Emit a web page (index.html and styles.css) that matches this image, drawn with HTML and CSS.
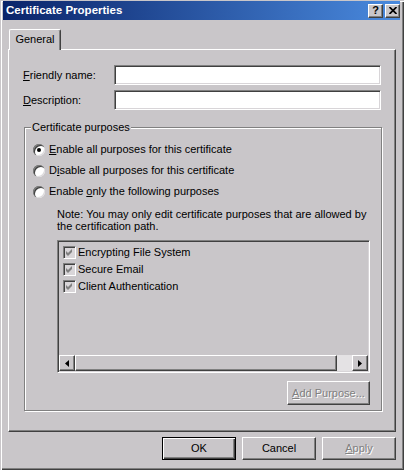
FILE: index.html
```html
<!DOCTYPE html>
<html lang="en">
  <head>
    <meta charset="UTF-8" />
    <title>Certificate Properties</title>
    <link rel="stylesheet" href="styles.css">
  </head>
  <body>
    <div class="window">
      <div class="titlebar">
        <span class="title">Certificate Properties</span>
        <div class="title-buttons">
          <span class="title-btn help">?</span>
          <span class="title-btn">
            <svg width="8" height="7" viewBox="0 0 8 7">
              <path d="M0.5 0 L7.5 7 M7.5 0 L0.5 7" stroke="#000" stroke-width="1.7" />
            </svg>
          </span>
        </div>
      </div>

      <div class="client">
        <div class="tabs">
          <div class="tab">General</div>
        </div>

        <div class="tab-panel">
          <div class="field-row">
            <label class="field-label"><u>F</u>riendly name:</label>
            <input class="field" type="text" />
          </div>
          <div class="field-row">
            <label class="field-label"><u>D</u>escription:</label>
            <input class="field" type="text" />
          </div>

          <fieldset class="group">
            <legend>Certificate purposes</legend>

            <div class="radio-row">
              <span class="radio checked"><span class="radio-dot"></span></span>
              <span><u>E</u>nable all purposes for this certificate</span>
            </div>
            <div class="radio-row">
              <span class="radio"></span>
              <span>D<u>i</u>sable all purposes for this certificate</span>
            </div>
            <div class="radio-row">
              <span class="radio"></span>
              <span>Enable <u>o</u>nly the following purposes</span>
            </div>

            <p class="note">
              Note: You may only edit certificate purposes that are allowed by<br />
              the certification path.
            </p>

            <div class="listbox">
              <div class="list-items">
                <div class="list-item">
                  <span class="check"><svg width="11" height="11" viewBox="0 0 11 11"><polygon points="2,4 4,6 8,2 8,5 4,9 2,7" fill="#808080" /></svg></span>
                  Encrypting File System
                </div>
                <div class="list-item">
                  <span class="check"><svg width="11" height="11" viewBox="0 0 11 11"><polygon points="2,4 4,6 8,2 8,5 4,9 2,7" fill="#808080" /></svg></span>
                  Secure Email
                </div>
                <div class="list-item">
                  <span class="check"><svg width="11" height="11" viewBox="0 0 11 11"><polygon points="2,4 4,6 8,2 8,5 4,9 2,7" fill="#808080" /></svg></span>
                  Client Authentication
                </div>
              </div>
              <div class="hscroll">
                <span class="scroll-btn">
                  <svg width="4" height="7" viewBox="0 0 4 7"><polygon points="4,0 0,3.5 4,7" fill="#000" /></svg>
                </span>
                <span class="scroll-thumb"></span>
                <span class="scroll-track"></span>
                <span class="scroll-btn">
                  <svg width="4" height="7" viewBox="0 0 4 7"><polygon points="0,0 4,3.5 0,7" fill="#000" /></svg>
                </span>
              </div>
            </div>

            <div class="group-actions">
              <button class="btn add-btn" disabled><u>A</u>dd Purpose...</button>
            </div>
          </fieldset>
        </div>

        <div class="dialog-buttons">
          <button class="btn default">OK</button>
          <button class="btn">Cancel</button>
          <button class="btn" disabled><u>A</u>pply</button>
        </div>
      </div>
    </div>
  </body>
</html>
```

FILE: styles.css
```css
:root {
  --face: #c9c6c9;
  --light: #ffffff;
  --shadow: #808080;
  --dark: #404040;
  --track: #e4e2e4;
}

* {
  box-sizing: border-box;
  margin: 0;
  padding: 0;
}

body {
  font-family: "Liberation Sans", Arial, sans-serif;
  font-size: 11px;
  line-height: 13px;
  color: #000;
  background: var(--face);
}

u {
  text-decoration: underline;
  text-underline-offset: 1px;
}

/* window frame */

.window {
  width: 404px;
  height: 470px;
  display: flex;
  flex-direction: column;
  padding: 1px 4px 3px 3px;
  background: var(--face);
  box-shadow: inset 1px 1px var(--face), inset 2px 2px var(--light),
    inset -1px -1px var(--dark), inset -2px -2px var(--shadow);
}

.titlebar {
  height: 19px;
  display: flex;
  align-items: center;
  justify-content: space-between;
  padding: 0 0 0 3px;
  background: linear-gradient(to right, #0a246a, #4a8ade);
}

.title {
  color: #fff;
  font-weight: bold;
  font-size: 11.5px;
}

.title-buttons {
  display: flex;
  gap: 2px;
}

.title-btn {
  width: 15px;
  height: 14px;
  display: flex;
  align-items: center;
  justify-content: center;
  background: var(--face);
  border: 1px solid;
  border-color: var(--light) var(--dark) var(--dark) var(--light);
  box-shadow: inset -1px -1px var(--shadow);
  font-weight: bold;
  font-size: 11px;
  line-height: 11px;
}

.title-btn.help {
  padding-bottom: 1px;
}

/* client area */

.client {
  flex: 1;
  display: flex;
  flex-direction: column;
  padding: 9px 4px 7px 5px;
}

.tabs {
  display: flex;
  align-items: flex-start;
  height: 20px;
}

.tab {
  position: relative;
  height: 21px;
  width: 52px;
  margin-left: 1px;
  margin-bottom: -1px;
  text-align: center;
  line-height: 18px;
  background: var(--face);
  border-top: 1px solid var(--light);
  border-left: 1px solid var(--light);
  border-right: 1px solid var(--dark);
  border-radius: 2px 2px 0 0;
  box-shadow: inset -1px 0 var(--shadow);
}

.tab-panel {
  flex: 1;
  display: flex;
  flex-direction: column;
  padding: 15px 14px 0 14px;
  border: 1px solid;
  border-color: var(--light) var(--dark) var(--dark) var(--light);
  box-shadow: inset -1px -1px var(--shadow);
}

.field-row {
  display: flex;
  align-items: center;
  margin-bottom: 5px;
}

.field-label {
  width: 91px;
}

.field {
  flex: 1;
  height: 20px;
  background: #fff;
  border: 1px solid;
  border-color: var(--shadow) var(--light) var(--light) var(--shadow);
  box-shadow: inset 1px 1px var(--dark), inset -1px -1px #d8d5d8;
  outline: none;
  font: inherit;
}

/* group box */

.group {
  margin: 6px -1px 0 1px;
  padding: 5px 11px 5px 8px;
  border: 1px solid var(--shadow);
  box-shadow: inset 1px 1px var(--light), 1px 1px 0 var(--light);
}

.group legend {
  margin-left: -2px;
  padding: 0 1px;
  background: var(--face);
}

.radio-row {
  display: flex;
  align-items: center;
  height: 21px;
}

.radio {
  width: 12px;
  height: 12px;
  margin-right: 4px;
  display: flex;
  align-items: center;
  justify-content: center;
  border-radius: 50%;
  background: #fff;
  box-shadow: inset 1px 1px 0 var(--shadow), inset 2px 2px 0 var(--dark),
    inset -1px -1px 0 #dcdadc;
}

.radio-dot {
  width: 4px;
  height: 4px;
  border-radius: 50%;
  background: #000;
}

.note {
  margin: 6px 0 0 24px;
  line-height: 12px;
  white-space: nowrap;
}

/* list of purposes */

.listbox {
  height: 133px;
  margin: 8px 0 0 24px;
  padding: 1px;
  display: flex;
  flex-direction: column;
  border: 1px solid;
  border-color: var(--shadow) var(--light) var(--light) var(--shadow);
  box-shadow: inset 1px 1px var(--dark), inset -1px -1px #d8d5d8;
}

.list-items {
  flex: 1;
  padding: 2px 0 0 4px;
}

.list-item {
  height: 17px;
  display: flex;
  align-items: center;
}

.check {
  width: 13px;
  height: 13px;
  margin-right: 2px;
  display: flex;
  align-items: center;
  justify-content: center;
  background: #d9d6d9;
  border: 1px solid;
  border-color: var(--shadow) var(--light) var(--light) var(--shadow);
  box-shadow: inset 1px 1px var(--dark);
}

.hscroll {
  height: 16px;
  display: flex;
}

.scroll-btn,
.scroll-thumb {
  height: 16px;
  background: var(--face);
  border: 1px solid;
  border-color: var(--light) var(--dark) var(--dark) var(--light);
  box-shadow: inset -1px -1px var(--shadow);
}

.scroll-btn {
  width: 16px;
  display: flex;
  align-items: center;
  justify-content: center;
}

.scroll-thumb {
  flex: 1;
}

.scroll-track {
  width: 15px;
  background: var(--track);
}

.group-actions {
  display: flex;
  justify-content: flex-end;
  margin-top: 8px;
}

/* push buttons */

.btn {
  width: 74px;
  height: 23px;
  font: inherit;
  color: #000;
  background: var(--face);
  border: 1px solid;
  border-color: var(--light) var(--dark) var(--dark) var(--light);
  box-shadow: inset -1px -1px var(--shadow);
}

.btn:disabled {
  color: var(--shadow);
  text-shadow: 1px 1px var(--light);
}

.btn.default {
  border-color: #000;
  box-shadow: inset 1px 1px var(--light), inset -1px -1px var(--dark),
    inset -2px -2px var(--shadow);
}

.add-btn {
  width: 83px;
  height: 24px;
}

.dialog-buttons {
  display: flex;
  justify-content: flex-end;
  gap: 6px;
  margin-top: 5px;
}
```
